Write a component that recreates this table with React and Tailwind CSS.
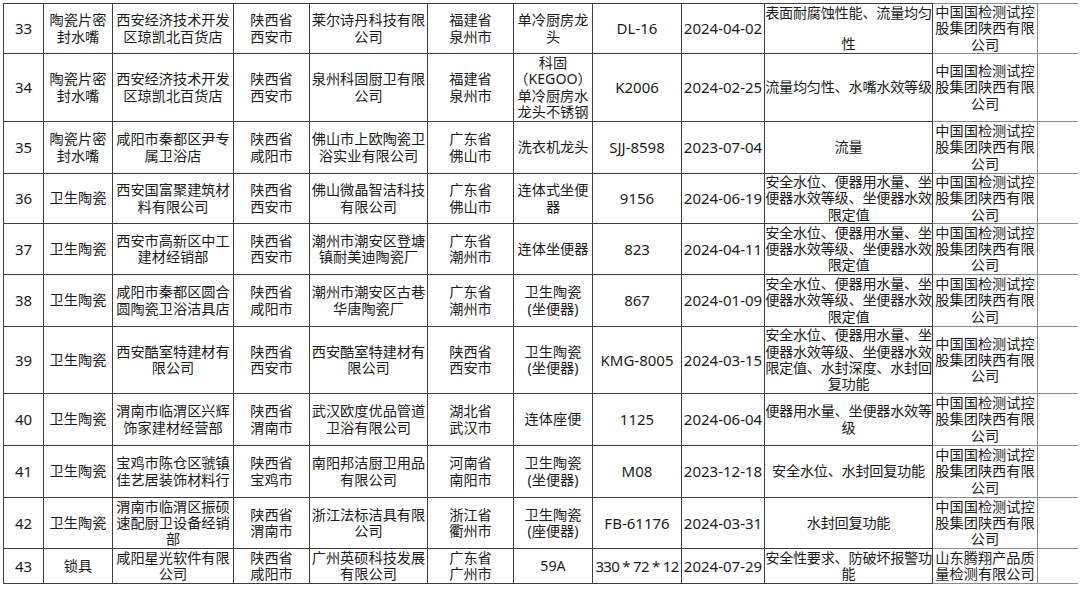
const ORG = ["中国国检测试控", "股集团陕西有限", "公司"];
const TOILET_ISSUE = ["安全水位、便器用水量、坐", "便器水效等级、坐便器水效", "限定值"];

const rows = [
  {
    n: "33", h: 50, cat: ["陶瓷片密", "封水嘴"], seller: ["西安经济技术开发", "区琼凯北百货店"], sloc: ["陕西省", "西安市"],
    maker: ["莱尔诗丹科技有限", "公司"], mloc: ["福建省", "泉州市"], prod: ["单冷厨房龙", "头"],
    model: "DL-16", date: "2024-04-02", issue: ["表面耐腐蚀性能、流量均匀", "性"], spread: true, org: ORG,
  },
  {
    n: "34", h: 68, cat: ["陶瓷片密", "封水嘴"], seller: ["西安经济技术开发", "区琼凯北百货店"], sloc: ["陕西省", "西安市"],
    maker: ["泉州科固厨卫有限", "公司"], mloc: ["福建省", "泉州市"], prod: ["科固", "（KEGOO）", "单冷厨房水", "龙头不锈钢"],
    model: "K2006", date: "2024-02-25", issue: ["流量均匀性、水嘴水效等级"], org: ORG,
  },
  {
    n: "35", h: 52, cat: ["陶瓷片密", "封水嘴"], seller: ["咸阳市秦都区尹专", "属卫浴店"], sloc: ["陕西省", "咸阳市"],
    maker: ["佛山市上欧陶瓷卫", "浴实业有限公司"], mloc: ["广东省", "佛山市"], prod: ["洗衣机龙头"],
    model: "SJJ-8598", date: "2023-07-04", issue: ["流量"], org: ORG,
  },
  {
    n: "36", h: 50, cat: ["卫生陶瓷"], seller: ["西安国富聚建筑材", "料有限公司"], sloc: ["陕西省", "西安市"],
    maker: ["佛山微晶智洁科技", "有限公司"], mloc: ["广东省", "佛山市"], prod: ["连体式坐便", "器"],
    model: "9156", date: "2024-06-19", issue: TOILET_ISSUE, org: ORG,
  },
  {
    n: "37", h: 51, cat: ["卫生陶瓷"], seller: ["西安市高新区中工", "建材经销部"], sloc: ["陕西省", "西安市"],
    maker: ["潮州市潮安区登塘", "镇耐美迪陶瓷厂"], mloc: ["广东省", "潮州市"], prod: ["连体坐便器"],
    model: "823", date: "2024-04-11", issue: TOILET_ISSUE, org: ORG,
  },
  {
    n: "38", h: 52, cat: ["卫生陶瓷"], seller: ["咸阳市秦都区圆合", "圆陶瓷卫浴洁具店"], sloc: ["陕西省", "咸阳市"],
    maker: ["潮州市潮安区古巷", "华唐陶瓷厂"], mloc: ["广东省", "潮州市"], prod: ["卫生陶瓷", "(坐便器)"],
    model: "867", date: "2024-01-09", issue: TOILET_ISSUE, org: ORG,
  },
  {
    n: "39", h: 67, cat: ["卫生陶瓷"], seller: ["西安酷室特建材有", "限公司"], sloc: ["陕西省", "西安市"],
    maker: ["西安酷室特建材有", "限公司"], mloc: ["陕西省", "西安市"], prod: ["卫生陶瓷", "(坐便器)"],
    model: "KMG-8005", date: "2024-03-15",
    issue: ["安全水位、便器用水量、坐", "便器水效等级、坐便器水效", "限定值、水封深度、水封回", "复功能"], org: ORG,
  },
  {
    n: "40", h: 52, cat: ["卫生陶瓷"], seller: ["渭南市临渭区兴辉", "饰家建材经营部"], sloc: ["陕西省", "渭南市"],
    maker: ["武汉欧度优品管道", "卫浴有限公司"], mloc: ["湖北省", "武汉市"], prod: ["连体座便"],
    model: "1125", date: "2024-06-04", issue: ["便器用水量、坐便器水效等", "级"], org: ORG,
  },
  {
    n: "41", h: 52, cat: ["卫生陶瓷"], seller: ["宝鸡市陈仓区虢镇", "佳艺居装饰材料行"], sloc: ["陕西省", "宝鸡市"],
    maker: ["南阳邦洁厨卫用品", "有限公司"], mloc: ["河南省", "南阳市"], prod: ["卫生陶瓷", "(坐便器)"],
    model: "M08", date: "2023-12-18", issue: ["安全水位、水封回复功能"], org: ORG,
  },
  {
    n: "42", h: 51, cat: ["卫生陶瓷"], seller: ["渭南市临渭区振硕", "速配厨卫设备经销", "部"], sloc: ["陕西省", "渭南市"],
    maker: ["浙江法标洁具有限", "公司"], mloc: ["浙江省", "衢州市"], prod: ["卫生陶瓷", "(座便器)"],
    model: "FB-61176", date: "2024-03-31", issue: ["水封回复功能"], org: ORG,
  },
  {
    n: "43", h: 35, cat: ["锁具"], seller: ["咸阳星光软件有限", "公司"], sloc: ["陕西省", "咸阳市"],
    maker: ["广州英硕科技发展", "有限公司"], mloc: ["广东省", "广州市"], prod: ["59A"],
    model: "330 * 72 * 12", tight: true, date: "2024-07-29", issue: ["安全性要求、防破坏报警功", "能"],
    org: ["山东腾翔产品质", "量检测有限公司"],
  },
];

const Lines = ({ lines }) => (
  <div className="flex flex-col items-center">
    {lines.map((l, i) => (
      <span key={i} className="block whitespace-nowrap">
        {l}
      </span>
    ))}
  </div>
);

const cell = "border border-[#3d3d3d] p-0 text-center align-middle overflow-hidden";
const latin = "text-[15px] whitespace-nowrap";

const Row = ({ r }) => (
  <tr style={{ height: r.h }}>
    <td className={`${cell} ${latin}`}>{r.n}</td>
    <td className={cell}><Lines lines={r.cat} /></td>
    <td className={cell}><Lines lines={r.seller} /></td>
    <td className={cell}><Lines lines={r.sloc} /></td>
    <td className={cell}><Lines lines={r.maker} /></td>
    <td className={cell}><Lines lines={r.mloc} /></td>
    <td className={cell}><Lines lines={r.prod} /></td>
    <td className={`${cell} ${latin} ${r.tight ? "tracking-[-0.7px] text-[14.5px]" : ""}`}>{r.model}</td>
    <td className={`${cell} ${latin}`}>{r.date}</td>
    <td className={`${cell} tracking-[-0.3px]`}>
      {r.spread ? (
        <div className="flex flex-col justify-between items-center" style={{ height: r.h - 2 }}>
          {r.issue.map((l, i) => (
            <span key={i} className="block whitespace-nowrap">{l}</span>
          ))}
        </div>
      ) : (
        <Lines lines={r.issue} />
      )}
    </td>
    <td className="border border-[#8a8a8a] p-0 text-center align-middle"><Lines lines={r.org} /></td>
    <td className="border-y border-l border-[#8a8a8a] p-0"></td>
  </tr>
);

export default function App() {
  return (
    <div
      className="w-[1080px] h-[590px] bg-white overflow-hidden pt-[3px] pl-[3px] text-[14.2px] leading-[16.3px] text-[#1c1c1c]"
      style={{ fontFamily: '"Noto Sans", "Noto Sans CJK SC", sans-serif' }}
    >
      <table className="table-fixed border-collapse w-[1074px]">
        <colgroup>
          <col className="w-[40px]" />
          <col className="w-[69px]" />
          <col className="w-[121px]" />
          <col className="w-[76px]" />
          <col className="w-[118px]" />
          <col className="w-[86px]" />
          <col className="w-[79px]" />
          <col className="w-[89px]" />
          <col className="w-[83px]" />
          <col className="w-[168px]" />
          <col className="w-[105px]" />
          <col className="w-[40px]" />
        </colgroup>
        <tbody>
          {rows.map((r) => (
            <Row key={r.n} r={r} />
          ))}
        </tbody>
      </table>
    </div>
  );
}
